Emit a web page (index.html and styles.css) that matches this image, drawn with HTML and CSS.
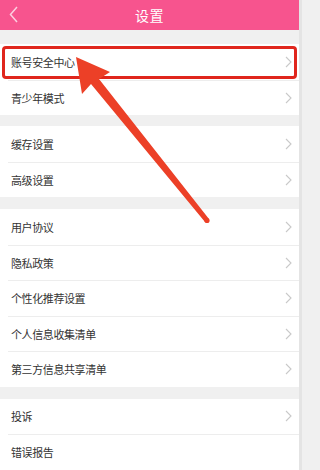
FILE: index.html
```html
<!DOCTYPE html>
<html lang="zh">
<head>
<meta charset="utf-8">
<link rel="stylesheet" href="styles.css">
</head>
<body>
<div class="page">
  <header class="header">
    <svg class="back" width="10" height="18" viewBox="0 0 10 18"><polyline points="8,1 1.5,8.5 8,16" fill="none" stroke="#fbd0e0" stroke-width="1.5"/></svg>
    <div class="title">设置</div>
  </header>

  <div class="gap gap-top"></div>
  <div class="group">
    <div class="row"><span>账号安全中心</span><svg class="chev" width="7" height="12" viewBox="0 0 7 12"><polyline points="1,1 6,6 1,11" fill="none" stroke="#c9c9c9" stroke-width="1.1"/></svg></div>
    <div class="row"><span>青少年模式</span><svg class="chev" width="7" height="12" viewBox="0 0 7 12"><polyline points="1,1 6,6 1,11" fill="none" stroke="#c9c9c9" stroke-width="1.1"/></svg></div>
  </div>

  <div class="gap gap-a"></div>
  <div class="group">
    <div class="row"><span>缓存设置</span><svg class="chev" width="7" height="12" viewBox="0 0 7 12"><polyline points="1,1 6,6 1,11" fill="none" stroke="#c9c9c9" stroke-width="1.1"/></svg></div>
    <div class="row"><span>高级设置</span><svg class="chev" width="7" height="12" viewBox="0 0 7 12"><polyline points="1,1 6,6 1,11" fill="none" stroke="#c9c9c9" stroke-width="1.1"/></svg></div>
  </div>

  <div class="gap"></div>
  <div class="group">
    <div class="row"><span>用户协议</span><svg class="chev" width="7" height="12" viewBox="0 0 7 12"><polyline points="1,1 6,6 1,11" fill="none" stroke="#c9c9c9" stroke-width="1.1"/></svg></div>
    <div class="row"><span>隐私政策</span><svg class="chev" width="7" height="12" viewBox="0 0 7 12"><polyline points="1,1 6,6 1,11" fill="none" stroke="#c9c9c9" stroke-width="1.1"/></svg></div>
    <div class="row"><span>个性化推荐设置</span><svg class="chev" width="7" height="12" viewBox="0 0 7 12"><polyline points="1,1 6,6 1,11" fill="none" stroke="#c9c9c9" stroke-width="1.1"/></svg></div>
    <div class="row"><span>个人信息收集清单</span><svg class="chev" width="7" height="12" viewBox="0 0 7 12"><polyline points="1,1 6,6 1,11" fill="none" stroke="#c9c9c9" stroke-width="1.1"/></svg></div>
    <div class="row"><span>第三方信息共享清单</span><svg class="chev" width="7" height="12" viewBox="0 0 7 12"><polyline points="1,1 6,6 1,11" fill="none" stroke="#c9c9c9" stroke-width="1.1"/></svg></div>
  </div>

  <div class="gap"></div>
  <div class="group">
    <div class="row"><span>投诉</span><svg class="chev" width="7" height="12" viewBox="0 0 7 12"><polyline points="1,1 6,6 1,11" fill="none" stroke="#c9c9c9" stroke-width="1.1"/></svg></div>
    <div class="row"><span>错误报告</span></div>
  </div>

  <div class="highlight"></div>
  <svg class="arrow" width="302" height="470" viewBox="0 0 302 470">
    <polygon points="76,57 110,72 99,79 209,219 205,222 91,84 82,94" fill="#ec4027"/>
    <circle cx="207" cy="220.5" r="2.6" fill="#ec4027"/>
  </svg>
</div>
</body>
</html>
```

FILE: styles.css
```css
html, body {
  margin: 0;
  padding: 0;
  background: #f0f0f0;
}

.page {
  position: relative;
  width: 302px;
  height: 470px;
  overflow: hidden;
  background: #f0f0f0;
  font-family: "Noto Sans CJK SC", "Noto Sans", sans-serif;
  box-sizing: border-box;
  border-right: 3px solid #e4e4e4;
}

.header {
  height: 30px;
  background: #f7548e;
  display: flex;
  align-items: center;
  justify-content: center;
  position: relative;
}

.back {
  position: absolute;
  left: 9px;
  top: 6px;
}

.title {
  color: #ffffff;
  font-size: 14px;
  letter-spacing: 0.5px;
  margin-top: -1px;
}

.gap {
  height: 12px;
  background: #f0f0f0;
}

.gap-top {
  height: 14px;
}

.gap-a {
  height: 11px;
}

.group {
  background: #ffffff;
  padding-left: 8px;
}

.row {
  height: 35.5px;
  box-sizing: border-box;
  display: flex;
  align-items: center;
  justify-content: space-between;
  padding-left: 3px;
  padding-right: 7px;
  border-top: 1px solid #ededed;
  color: #333333;
  font-size: 11px;
  letter-spacing: -0.4px;
}

.row:first-child {
  border-top: none;
}

.chev {
  display: block;
}

.highlight {
  position: absolute;
  left: 2px;
  top: 46px;
  width: 295px;
  height: 33px;
  box-sizing: border-box;
  border: 3px solid #e0261d;
  border-radius: 4px;
}

.arrow {
  position: absolute;
  left: 0;
  top: 0;
}
```
